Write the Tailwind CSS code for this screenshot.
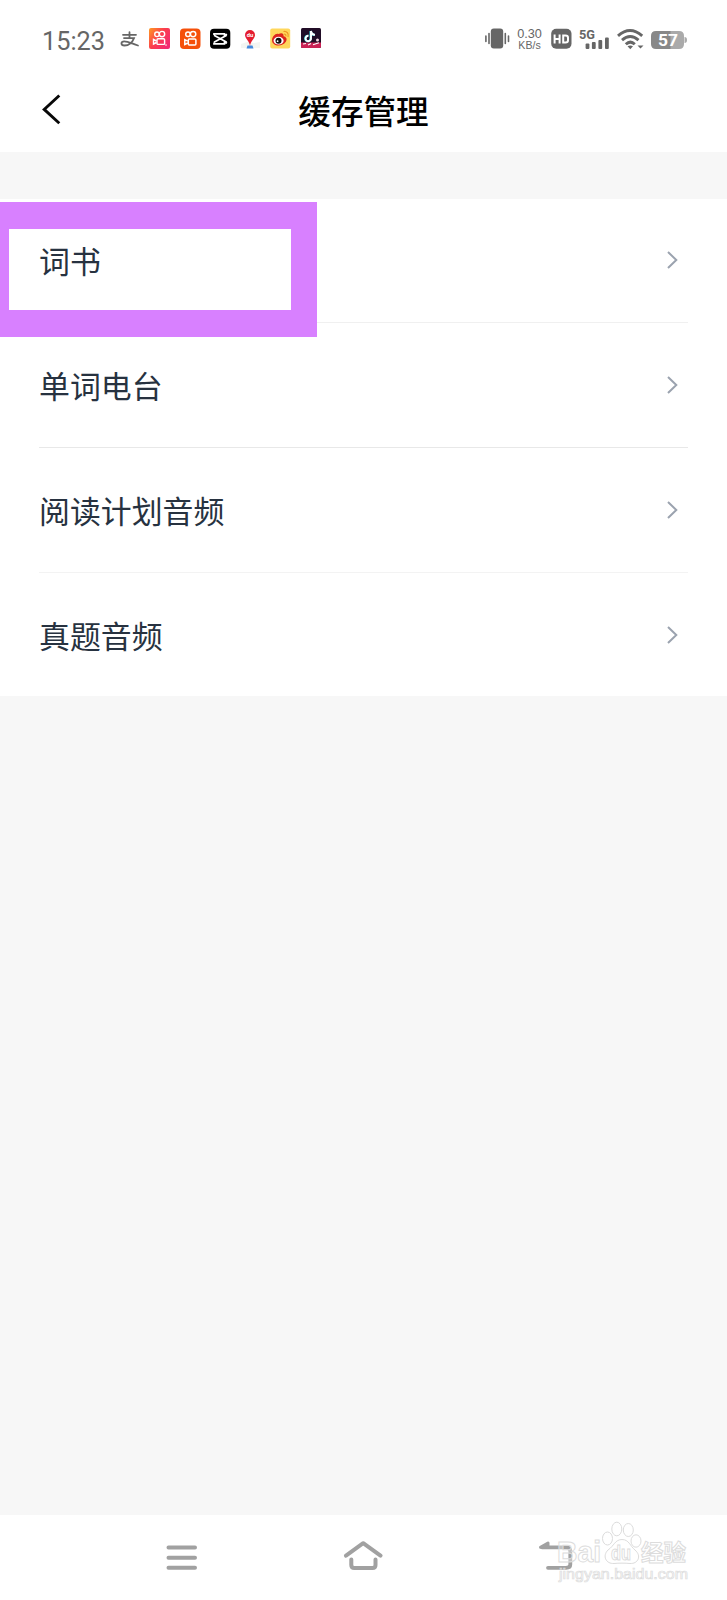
<!DOCTYPE html>
<html lang="zh-CN">
<head>
<meta charset="utf-8">
<title>缓存管理</title>
<script src="https://cdn.jsdelivr.net/npm/@tailwindcss/browser@4"></script>
</head>
<body class="w-[727px] h-[1600px] overflow-hidden flex flex-col bg-[#f7f7f7] font-['Noto_Sans_CJK_SC',sans-serif]">

<!-- Status bar -->
<header class="h-[76px] shrink-0 bg-white flex items-start pt-[28px] pl-[42px] pr-[40px] text-[#666]">
  <div class="w-[77px] shrink-0 pt-px text-[25.3px] leading-[25px] font-['Roboto',sans-serif]">15:23</div>
  <div class="flex gap-[9.3px]">
    <svg class="w-[21px] h-[21px]" viewBox="0 0 21 21" fill="none" stroke="#666" stroke-width="1.8" stroke-linecap="round"><path d="M4 6.8H17M10.5 4.2V9.8M5 10.1H15C13.3 14.5 9.5 17.5 5.5 17.5C1.5 17.5 1.5 13.3 5.2 13.3C9.5 13.3 13.5 16 19 17.5"/></svg>
    <svg class="w-[21px] h-[21px]" viewBox="0 0 21 21"><defs><linearGradient id="a" x1="0" y1="0" x2="1" y2=".7"><stop stop-color="#ff9b22"/><stop offset=".5" stop-color="#fb3f4c"/><stop offset="1" stop-color="#f22a72"/></linearGradient></defs><rect width="21" height="21" rx="2" fill="url(#a)"/><g fill="none" stroke="#fff" stroke-width="1.4"><circle cx="8" cy="6.3" r="2.3"/><circle cx="13" cy="6.1" r="2.7"/><rect x="8" y="10.8" width="7.6" height="5.6" rx="1"/><path d="M7.5 13L4.5 11.5V16L7.5 14.5"/></g><circle cx="17" cy="17" r=".8" fill="#fff"/></svg>
    <svg class="w-[21px] h-[21px]" viewBox="0 0 21 21"><rect y=".5" width="20.5" height="20.5" rx="4" fill="#f5500a"/><g fill="none" stroke="#fff" stroke-width="1.5"><circle cx="8" cy="6.3" r="2.3"/><circle cx="13.1" cy="6.1" r="2.7"/><rect x="8.3" y="11" width="7.6" height="6" rx="1"/><path d="M7.8 13.2L4.8 11.7V16.5L7.8 15"/></g></svg>
    <svg class="w-[21px] h-[21px]" viewBox="0 0 21 21"><rect y=".7" width="20.3" height="20" rx="4" fill="#000"/><path d="M4 7V5.8H14.5V7.5L17 6.2M4 14.5V15.8H14.5V14L17 15.3M4 7.3L16.7 14.3M4 14.3L16.7 7.3" fill="none" stroke="#fff" stroke-width="1.7"/></svg>
    <svg class="w-[21px] h-[21px]" viewBox="0 0 21 21"><path d="M1 16L7 14L14 15L20 14V20H1Z" fill="#f3f5f2"/><path d="M7.5 17.5H12.5L13.5 20.5H6.5Z" fill="#4389dc"/><path d="M10 18C9.5 13 5 10.8 5 7A5 5 0 0 1 15 7C15 10.8 10.5 13 10 18Z" fill="#e41d30"/><text x="6.8" y="9" font-size="5.8" font-weight="700" fill="#fff" font-family="Roboto">du</text></svg>
    <svg class="w-[21px] h-[21px]" viewBox="0 0 21 21"><rect x=".2" y=".5" width="20" height="20" rx="2" fill="#ffd75c"/><path d="M2 12C2.3 8 6 4.5 8.5 6C12 4.5 14 5.8 13.5 8.2C16.5 9 17.5 11 15.8 13.8C12 19.5 2 18.5 2 12Z" fill="#dc251d"/><ellipse cx="8.6" cy="12.7" rx="5" ry="3.9" fill="#fff"/><circle cx="8.5" cy="12.8" r="3" fill="#111"/><circle cx="7.6" cy="13.2" r=".9" fill="#fff"/><path d="M13.5 3.5C17 3 19 5.5 18 9M14 6C15.5 6 16.2 7 15.8 8.4" fill="none" stroke="#ef9825" stroke-width="1.2"/></svg>
    <svg class="w-[21px] h-[21px]" viewBox="0 0 21 21"><rect width="20" height="20" rx="1.5" fill="#210d27"/><path d="M0 14.5H20V18.5A1.5 1.5 0 0 1 18.5 20H1.5A1.5 1.5 0 0 1 0 18.5Z" fill="#c92255"/><path d="M2 16L5 15.5M7 17L10 15.5M12 16.7L18 14.8" stroke="#fff" stroke-width="1.2"/><path d="M9.6 3V10.5A2.7 2.7 0 1 1 7.2 7.8M9.6 3C10 5.7 11.5 6.8 13.7 6.9" fill="none" stroke="#35dbe0" stroke-width="2.2"/><path d="M10 3V10.5A2.7 2.7 0 1 1 7.5 7.8M10 3C10.4 5.7 12 6.8 14 6.9" fill="none" stroke="#fff" stroke-width="1.9"/><circle cx="16.5" cy="12" r="1.5" fill="#f3d8e0"/></svg>
  </div>
  <div class="ml-auto flex">
    <svg class="w-[25px] h-[22px] mr-[7px]" viewBox="0 0 25 22" fill="#666"><rect x="5.8" y=".5" width="12.4" height="20" rx="3"/><path d="M.9 8V13.5M4 5.5V15.5M20.3 5.5V15.5M23.5 8V13.5" stroke="#666" stroke-width="1.6" stroke-linecap="round"/></svg>
    <div class="w-[26px] mr-[8px] text-center whitespace-nowrap font-['Liberation_Sans',sans-serif]">
      <div class="text-[12.7px] leading-[12px] -ml-[1px]">0.30</div>
      <div class="text-[10.6px] leading-[10px] -ml-[1px]">KB/s</div>
    </div>
    <svg class="w-[21px] h-[22px] mr-[7px]" viewBox="0 0 21 22"><rect x=".2" y=".8" width="20.3" height="20" rx="5" fill="#666"/><path d="M3.6 6.5V15.5M8.6 6.5V15.5M3.6 11H8.6M12.2 7.5V14.5H14.5Q17 14.5 17 12.3V9.7Q17 7.5 14.5 7.5H11.2" fill="none" stroke="#fff" stroke-width="2"/></svg>
    <svg class="w-[31px] h-[22px] mr-[7px]" viewBox="0 0 31 22" fill="#666"><text x="0" y="10.5" font-size="13" font-weight="700" textLength="16" lengthAdjust="spacingAndGlyphs" font-family="Roboto">5G</text><rect x="6.6" y="15.5" width="3.8" height="5.5" rx="1"/><rect x="12.9" y="14" width="3.8" height="7" rx="1"/><rect x="19.4" y="12" width="3.8" height="9" rx="1"/><rect x="26" y="9.5" width="3.8" height="11.5" rx="1"/></svg>
    <svg class="w-[27px] h-[22px] mr-[7px]" viewBox="0 0 27 22" fill="none" stroke="#666" stroke-width="2.9"><path d="M1 7.8Q13 -3 25.2 7.8M5 12.1Q13.2 4.8 21.5 12.1M8.8 16.3Q13.3 12 17.8 16.3"/><path d="M10.5 18.2Q13.3 16.7 16 18.2L13.3 21.2ZM20.5 17.5H26.5L23.5 20.5Z" fill="#666" stroke="none"/></svg>
    <svg class="w-[36px] h-[22px]" viewBox="0 0 36 22"><path d="M5 3H20V21H5Q0 21 0 16V8Q0 3 5 3Z" fill="#888"/><path d="M19.5 3H28Q33 3 33 8V16Q33 21 28 21H19.5Z" fill="#aaa"/><path d="M33.5 9Q36 9 36 12T33.5 15Z" fill="#aaa"/><text x="7" y="18" font-size="17" font-weight="700" textLength="20" lengthAdjust="spacingAndGlyphs" fill="#fff" font-family="Roboto">57</text></svg>
  </div>
</header>

<!-- Title bar -->
<div class="h-[76px] shrink-0 bg-white grid grid-cols-[100px_1fr_100px] items-center pb-[8px]">
  <svg class="ml-[40px] w-[22px] h-[32px] -mt-[2px]" viewBox="0 0 22 32" fill="none" stroke="#080808" stroke-width="2.9"><path d="M19.3 2.5L4.2 16.4L19.3 30.2"/></svg>
  <h1 class="text-center text-[32.6px] leading-[40px] font-medium text-black">缓存管理</h1>
</div>

<!-- Cache list -->
<main class="relative mt-[47px] h-[497px] shrink-0 bg-white px-[39px] grid grid-rows-[124px_125px_125px_123px] text-[30.9px] leading-[40px] text-[#273240]">
  <div class="flex justify-between items-center pr-[9px] border-b border-[#f0f0f0]"><span class="relative z-10 -mt-[2px]">词书</span><svg class="w-[14px] h-[20px] -mt-[2px]" viewBox="0 0 14 20" fill="none" stroke="#9ba3af" stroke-width="2"><path d="M3 2L11.3 10L3 18"/></svg></div>
  <div class="flex justify-between items-center pr-[9px] border-b border-[#e8e8e8]"><span>单词电台</span><svg class="w-[14px] h-[20px]" viewBox="0 0 14 20" fill="none" stroke="#9ba3af" stroke-width="2"><path d="M3 2L11.3 10L3 18"/></svg></div>
  <div class="flex justify-between items-center pr-[9px] border-b border-[#f3f3f3]"><span class="-mt-px">阅读计划音频</span><svg class="w-[14px] h-[20px]" viewBox="0 0 14 20" fill="none" stroke="#9ba3af" stroke-width="2"><path d="M3 2L11.3 10L3 18"/></svg></div>
  <div class="flex justify-between items-center pr-[9px]"><span>真题音频</span><svg class="w-[14px] h-[20px]" viewBox="0 0 14 20" fill="none" stroke="#9ba3af" stroke-width="2"><path d="M3 2L11.3 10L3 18"/></svg></div>
  <!-- Highlight frame over the first row -->
  <div class="absolute left-0 top-[3px] w-[317px] h-[135px] border-[#d880ff] border-l-[9px] border-r-[26px] border-t-[27px] border-b-[27px]"></div>
</main>

<!-- Navigation bar -->
<nav class="relative mt-auto h-[85px] shrink-0 bg-white flex pl-[166px] pr-[152px] pt-[24px] text-[#a1a1a1]">
  <svg class="w-[32px] h-[34px]" viewBox="0 0 32 34" fill="none" stroke="currentColor" stroke-width="4" stroke-linecap="round"><path d="M2.5 8.5H29M2.5 18.7H29M2.5 28.8H29"/></svg>
  <svg class="ml-[145px] w-[40px] h-[34px]" viewBox="0 0 40 34" fill="none" stroke="currentColor" stroke-width="4" stroke-linecap="round" stroke-linejoin="round"><path d="M3 16.7L20.2 4.2L37.5 16.7M8.3 20.5V26Q8.3 29 11.3 29H29.5Q32.5 29 32.5 26V20.5"/></svg>
  <svg class="ml-auto w-[40px] h-[34px]" viewBox="0 0 40 34" fill="none" stroke="currentColor" stroke-width="3.8" stroke-linecap="round" stroke-linejoin="round"><path d="M7 8.3H31Q35.3 8.3 35.3 12V25.5Q35.3 28.8 31 28.8H13"/><path d="M5.5 8.3L13 4V8.3Z" stroke-width="3" fill="currentColor"/></svg>
  <!-- Watermark -->
  <svg class="absolute left-[550px] top-[4px] w-[150px] h-[70px]" viewBox="0 0 150 70" fill="#fff" fill-opacity=".35" stroke="#dcdcdc" stroke-width="1">
    <text x="7" y="43" font-size="30" font-family="Liberation Sans" font-weight="700" textLength="44" lengthAdjust="spacingAndGlyphs">Bai</text>
    <ellipse cx="57.5" cy="19.5" rx="5" ry="6.5"/><ellipse cx="66.8" cy="10" rx="5" ry="6.8"/><ellipse cx="78.3" cy="11" rx="5" ry="6.5"/><ellipse cx="86" cy="22" rx="5" ry="6.2"/>
    <path d="M72 20.5C79 20.5 80 27 85 31C92 37 88 45 80 44.5C75 44 69 44 64 44.5C56 45 52 37 58 31C64 27 65 20.5 72 20.5Z"/>
    <text x="61" y="41" font-size="20" font-family="Liberation Sans" font-weight="700" textLength="20" lengthAdjust="spacingAndGlyphs">du</text>
    <text x="91" y="42" font-size="23" font-family="Noto Sans CJK SC" font-weight="700" textLength="45" lengthAdjust="spacingAndGlyphs">经验</text>
    <text x="9" y="60" font-size="14.5" font-family="Liberation Sans" stroke-width=".7" textLength="129" lengthAdjust="spacingAndGlyphs">jingyan.baidu.com</text>
  </svg>
</nav>
</body>
</html>
